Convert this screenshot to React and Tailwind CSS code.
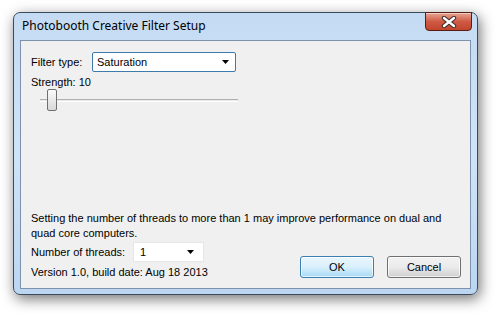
import React from "react";

function Arrow() {
  return (
    <svg width="7" height="4" viewBox="0 0 7 4" className="block">
      <path d="M0 0H7L3.5 4Z" fill="#000" />
    </svg>
  );
}

export default function App() {
  return (
    <div className="w-[496px] h-[317px] bg-white pt-[12px] pl-[13px] overflow-hidden" style={{ fontFamily: '"Liberation Sans", Arial, sans-serif' }}>
      <div className="w-[465px] h-[283px] rounded-[7px] border border-[#3b4b5e] bg-gradient-to-b from-[#c4dbf3] via-[#cfe3f8] to-[#bcd6f1] shadow-[2px_4px_14px_rgba(0,0,0,0.55)] flex flex-col">
        <div className="h-[27px] flex items-start">
          <div className="pl-[8px] pt-[5px] text-[12px] leading-[16px] text-black" style={{ fontFamily: '"Noto Sans", "Open Sans", sans-serif' }}>
            Photobooth Creative Filter Setup
          </div>
          <div className="ml-auto mr-[5px] w-[47px] h-[19px] -mt-px rounded-b-[4px] border border-[#5a1c14] bg-gradient-to-b from-[#e7a593] via-[#cf5a44] to-[#c2442c] flex items-center justify-center shadow-[inset_0_1px_0_rgba(255,255,255,0.45)]">
            <svg width="16" height="12" viewBox="0 0 16 12">
              <path d="M3 2L13 10M13 2L3 10" stroke="#3a2a2a" strokeWidth="4.4" strokeLinecap="round" />
              <path d="M3 2L13 10M13 2L3 10" stroke="#ffffff" strokeWidth="2.4" strokeLinecap="round" />
            </svg>
          </div>
        </div>
        <div className="mx-[6px] mb-[5px] flex-1 border border-[#7d93ad] bg-[#f0f0f0] flex flex-col px-[10px] pt-[11px] pb-[9px] text-[11px] leading-[13px] text-black">
          <div className="flex items-center h-[20px]">
            <span className="w-[61px]">Filter type:</span>
            <div className="w-[144px] h-[20px] bg-white border border-[#3d7bad] rounded-[2px] flex items-center pl-[4px] pr-[6px]">
              <span className="flex-1">Saturation</span>
              <Arrow />
            </div>
          </div>
          <div className="mt-[4px] h-[13px]">Strength: 10</div>
          <div className="relative h-[22px] w-[198px] ml-[9px]">
            <div className="absolute left-0 right-0 top-[10px] h-[3px] border-t border-[#b0b0b0] bg-[#e7eaea] border-b border-b-white" />
            <div className="absolute left-[7px] top-0 w-[10px] h-[22px] rounded-[2px] border border-[#707070] bg-gradient-to-b from-[#fbfbfb] to-[#d8d8d8]" />
          </div>
          <div className="flex-1" />
          <div className="leading-[15px]">
            Setting the number of threads to more than 1 may improve performance on dual and
            <br />
            quad core computers.
          </div>
          <div className="flex items-end">
            <div className="flex flex-col">
              <div className="flex items-center h-[20px] mt-[1px]">
                <span className="w-[102px]">Number of threads:</span>
                <div className="w-[71px] h-[20px] bg-white border border-[#e6e6e6] flex items-center pl-[6px] pr-[9px]">
                  <span className="flex-1">1</span>
                  <Arrow />
                </div>
              </div>
              <div className="mt-[4px] h-[13px]">Version 1.0, build date: Aug 18 2013</div>
            </div>
            <div className="ml-auto flex gap-[13px] mb-[1px] mr-[-1px]">
              <div className="w-[74px] h-[22px] rounded-[3px] border border-[#3c7fb1] bg-gradient-to-b from-[#eaf6fd] via-[#d9f0fc] to-[#a7d9f5] shadow-[inset_0_0_0_1px_rgba(255,255,255,0.7)] flex items-center justify-center">OK</div>
              <div className="w-[74px] h-[22px] rounded-[3px] border border-[#707070] bg-gradient-to-b from-[#f2f2f2] via-[#ebebeb] to-[#cfcfcf] shadow-[inset_0_0_0_1px_rgba(255,255,255,0.7)] flex items-center justify-center">Cancel</div>
            </div>
          </div>
        </div>
      </div>
    </div>
  );
}
